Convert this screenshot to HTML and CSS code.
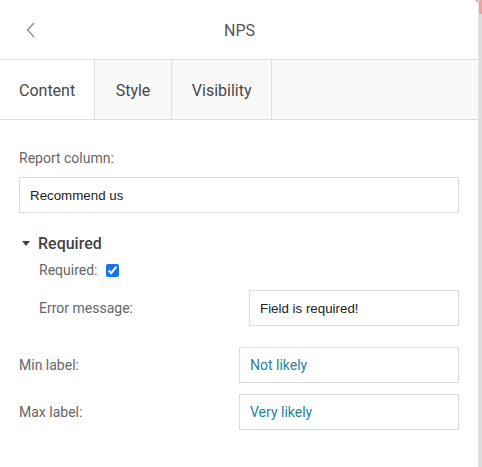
FILE: index.html
```html
<!DOCTYPE html>
<html>
<head>
<meta charset="utf-8">
<link rel="stylesheet" href="styles.css">
</head>
<body>
<div class="frame">
  <div class="panel">
    <div class="header">
      <span class="back"><svg width="10" height="16" viewBox="0 0 10 16"><path d="M8 1 L1.5 8 L8 15" fill="none" stroke="#8a8a8a" stroke-width="1.3"/></svg></span>
      <span class="title">NPS</span>
    </div>
    <div class="tabs">
      <div class="tab active">Content</div>
      <div class="tab">Style</div>
      <div class="tab">Visibility</div>
    </div>
    <div class="content">
      <div class="label top">Report column:</div>
      <div class="input dark">Recommend us</div>
      <div class="section-title"><span class="caret"></span>Required</div>
      <div class="nested">
        <div class="check-row"><span class="label">Required:</span><input type="checkbox" checked class="cb"></div>
        <div class="row err"><span class="label">Error message:</span><div class="input dark">Field is required!</div></div>
      </div>
      <div class="row min"><span class="label">Min label:</span><div class="input teal">Not likely</div></div>
      <div class="row max"><span class="label">Max label:</span><div class="input teal">Very likely</div></div>
    </div>
  </div>
  <div class="edge"></div>
</div>
</body>
</html>
```
FILE: styles.css
```css
html, body { margin: 0; padding: 0; }
body { background: #fff; font-family: Roboto, "Liberation Sans", sans-serif; width: 482px; height: 467px; overflow: hidden; }
.frame { display: flex; height: 467px; background: linear-gradient(#e9a9a6 0, #e9a9a6 14px, #fff 14px); }
.panel { width: 478px; background: #fff; border-top-right-radius: 5px; }
.edge { width: 4px; background: linear-gradient(#e8a5a3 0, #e8a5a3 14px, #dcdcdc 14px); border-left: 1px solid #e6e6e6; box-sizing: border-box; }
.header { height: 59px; border-bottom: 1px solid #dedede; display: flex; align-items: center; justify-content: center; position: relative; }
.back { position: absolute; left: 26px; top: 22px; line-height: 0; }
.title { font-size: 16px; color: #555; margin-top: 1px; margin-left: 1px; }
.tabs { height: 59px; background: #f9f9f9; border-bottom: 1px solid #dedede; display: flex; }
.tab { padding: 0 19px 0 19px; border-right: 1px solid #dedede; display: flex; align-items: center; font-size: 16px; color: #484848; padding-top: 1px; }
.tab:nth-child(2) { padding: 1px 20.5px 0 20.5px; }
.tab:nth-child(3) { padding: 1px 19.5px 0 20px; }
.tab.active { background: #fff; }
.content { padding: 28px 19px 0 19px; }
.label { font-size: 14px; line-height: 20px; color: #666; }
.label.top { margin-bottom: 9px; }
.input { height: 36px; box-sizing: border-box; border: 1px solid #dcdcdc; padding: 0 10px; display: flex; align-items: center; font-size: 14px; }
.input.dark { font-family: "Liberation Sans", Arial, sans-serif; font-size: 13.33px; color: #222; }
.input.teal { font-family: Roboto, sans-serif; color: #27849a; }
.section-title { margin-top: 20px; height: 20px; display: flex; align-items: center; font-size: 16px; font-weight: 500; color: #444; }
.caret { width: 0; height: 0; border-left: 4px solid transparent; border-right: 4px solid transparent; border-top: 5px solid #444; margin: 0 8px 0 3px; }
.nested { padding-left: 20px; }
.check-row { margin-top: 7px; height: 20px; display: flex; align-items: center; }
.cb { margin: 0 0 0 9px; width: 13px; height: 13px; accent-color: #1a73e8; }
.row { display: grid; grid-template-columns: 1fr 1fr; align-items: center; }
.row.err { margin-top: 10px; }
.row.min { margin-top: 21px; }
.row.max { margin-top: 11px; }
```
